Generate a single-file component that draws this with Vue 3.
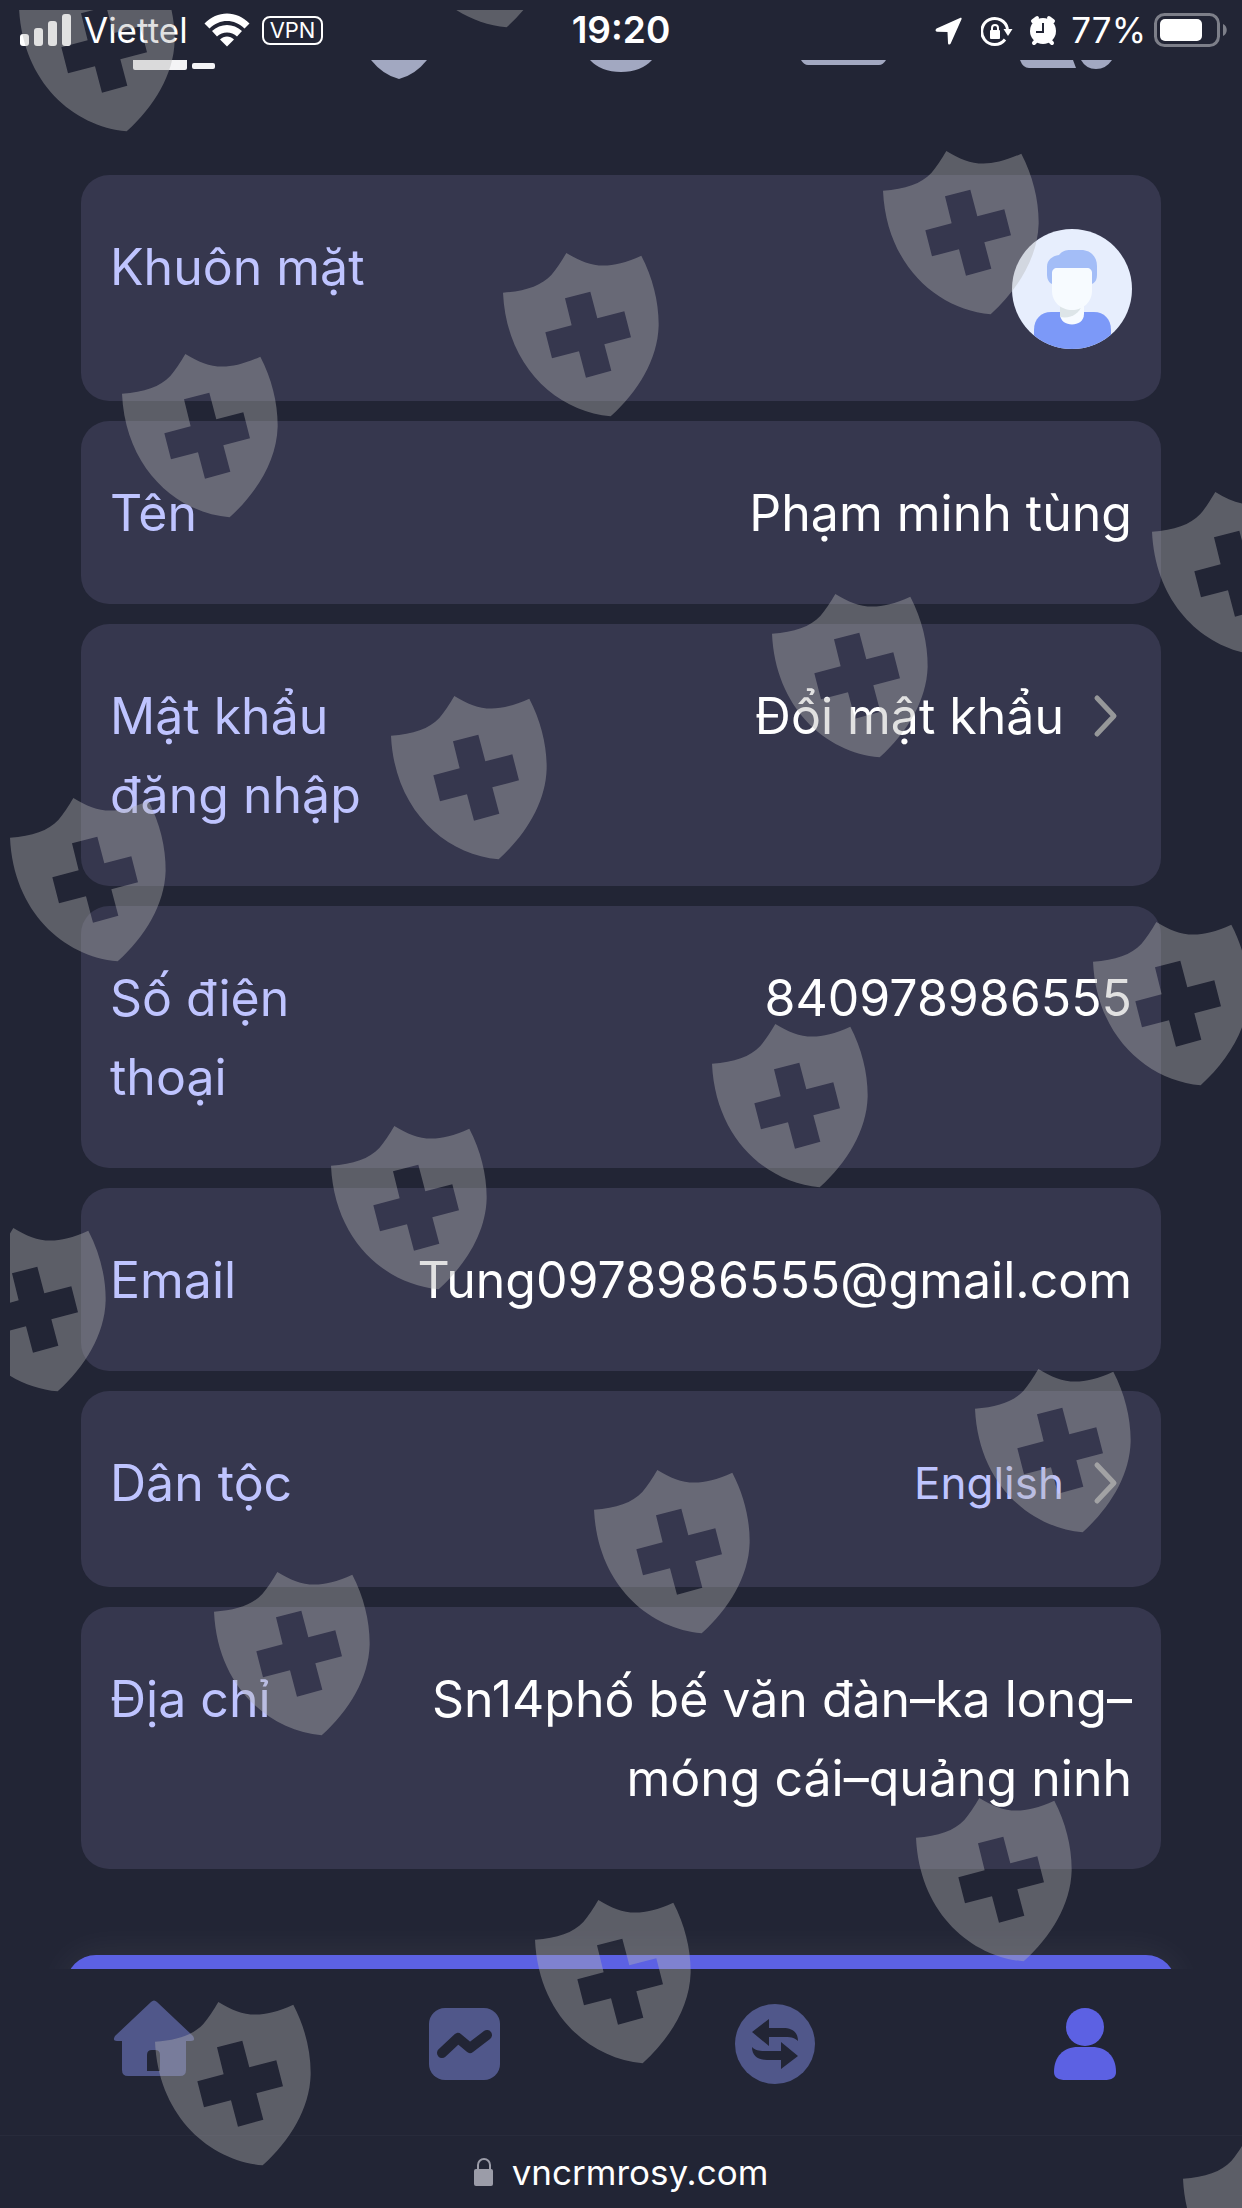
<template>
  <div class="page">
    <header class="status-bar">
      <div class="status-side">
        <svg class="signal" width="52" height="34" viewBox="0 0 52 34" fill="#fff">
          <rect x="0" y="21" width="9" height="12" rx="3" />
          <rect x="14" y="15" width="9" height="18" rx="3" />
          <rect x="28" y="8" width="9" height="25" rx="3" />
          <rect x="42" y="1" width="9" height="32" rx="3" />
        </svg>
        <span class="carrier">Viettel</span>
        <svg class="wifi" width="46" height="34" viewBox="0 0 46 34" fill="#fff">
          <path d="M0.500 10.500C13-3 33-3 45.500 10.500L40.500 15.500C30.500 5.500 15.500 5.500 5.500 15.500Z" />
          <path d="M8 18C16.500 10 29.500 10 38 18L33 23.500C27.500 18 18.500 18 13 23.500Z" />
          <path d="M16 26.500C20 22.500 26 22.500 30 26.500L23 33.500Z" />
        </svg>
        <span class="vpn">VPN</span>
      </div>
      <span class="clock">19:20</span>
      <div class="status-side status-right">
        <svg width="28" height="34" viewBox="0 0 28 34" fill="#fff">
          <path d="M26.500 6.200C27 5 26 4.600 25 5L1.500 15.500C0 16.500 0.300 18.600 2 18.700L12.500 19L13 30C13.100 32 15 32 15.700 30.500Z" />
        </svg>
        <svg class="rotation" width="32" height="34" viewBox="0 0 32 34">
          <path d="M26.500 16A13 13 0 1 0 24 26.500" fill="none" stroke="#fff" stroke-width="3" />
          <path d="M22.500 16H31.500L27 23Z" fill="#fff" />
          <rect x="9" y="17" width="10" height="9" rx="1" fill="#fff" />
          <path d="M11 18V15A3 3 0 0 1 17 15V18" fill="none" stroke="#fff" stroke-width="2" />
        </svg>
        <svg class="alarm" width="28" height="34" viewBox="0 0 28 34">
          <path d="M4 8L8 5M24 8L20 5M5 30L8 27M23 30L20 27" stroke="#fff" stroke-width="4" stroke-linecap="round" />
          <circle cx="14" cy="18" r="13" fill="#fff" />
          <path d="M14 10V19H7" fill="none" stroke="#222535" stroke-width="2" />
        </svg>
        <span class="percent">77%</span>
        <svg class="battery" width="74" height="36" viewBox="0 0 74 36">
          <rect x="1.500" y="2.500" width="63" height="31" rx="9" fill="none" stroke="#7d7f89" stroke-width="3" />
          <rect x="6" y="7" width="42" height="22" rx="5" fill="#fff" />
          <path d="M69 12C74 14 74 22 69 24Z" fill="#7d7f89" />
        </svg>
      </div>
    </header>

    <main class="content">
      <div class="tabs">
        <button v-for="tab in tabs" :key="tab.name" class="tab" :aria-label="tab.name">
          <svg width="100" height="24" viewBox="0 0 100 24">
            <path v-for="(shape, i) in tab.shapes" :key="i" :d="shape" :fill="tab.color" />
          </svg>
        </button>
      </div>

      <section class="cards">
        <div class="card">
          <span class="label">Khuôn mặt</span>
          <div class="value">
            <svg class="avatar" viewBox="0 0 120 120">
              <defs>
                <clipPath id="avatar-clip"><circle cx="60" cy="60" r="60" /></clipPath>
              </defs>
              <g clip-path="url(#avatar-clip)">
                <rect width="120" height="120" fill="#e7eefd" />
                <path d="M22 120V101C22 90 29 83 39 83H82C92 83 99 90 99 101V120Z" fill="#7c99f8" />
                <path d="M40 55C36 53 35 49 35 45V38C35 31 40 27 47 26C50 22 54 21 58 21H69C79 21 85 28 85 37V45C85 50 84 53 80 55Z" fill="#a3bdf7" />
                <path d="M48 76H72V85C72 99 48 99 48 85Z" fill="#f7fbff" />
                <path d="M48 76H70C67 85 59 90 48 88Z" fill="#dde5e8" />
                <path d="M40 44C40 41 42 39 45 39H75C78 39 80 41 80 44V62C80 73 71 81 60 81S40 73 40 62Z" fill="#f7fbff" />
              </g>
            </svg>
          </div>
        </div>

        <div v-for="row in rows" :key="row.label" class="card" :class="{ tall: row.tall }">
          <span class="label">{{ row.label }}</span>
          <button v-if="row.link" class="value link" :class="{ muted: row.tall }">
            {{ row.value }}
            <svg class="chevron" width="68" height="46" viewBox="0 0 68 46">
              <path d="M33 4L50 22L33 40" />
            </svg>
          </button>
          <span v-else class="value">{{ row.value }}</span>
        </div>
      </section>

      <button class="submit" aria-label="Submit"></button>
    </main>

    <nav class="bottom-nav">
      <a href="#home" aria-label="Home">
        <svg class="nav-icon" viewBox="0 0 90 90">
          <path
            fill-rule="evenodd"
            d="M41 3Q44 0 47 3L83 37Q86 42 81 42H76V71Q76 77 70 77H18Q12 77 12 71V42H7Q2 42 5 37ZM42 51Q37 51 37 56V72H50V56Q50 51 45 51Z"
          />
        </svg>
      </a>
      <a href="#market" aria-label="Market">
        <svg class="nav-icon" viewBox="0 0 90 90">
          <rect x="8" y="9" width="71" height="72" rx="16" />
          <path class="zigzag" d="M21 54L37 39L49 49L66 36" />
        </svg>
      </a>
      <a href="#trade" aria-label="Trade">
        <svg class="nav-icon" viewBox="0 0 90 90">
          <circle cx="44" cy="45" r="40" />
          <g class="arrows">
            <path d="M21 33L38 20V29H52C61 29 67 33 67 42C63 38 59 38 52 38H38V47Z" />
            <path d="M67 57L50 70V61H36C27 61 21 57 21 48C25 52 29 52 36 52H50V43Z" />
          </g>
        </svg>
      </a>
      <a href="#profile" class="active" aria-label="Profile">
        <svg class="nav-icon" viewBox="0 0 90 90">
          <circle cx="43" cy="28" r="19" />
          <path d="M12 73C12 58 21 48 36 48H50C65 48 74 58 74 73Q74 81 62 81H24Q12 81 12 73Z" />
        </svg>
      </a>
    </nav>

    <footer class="address-bar">
      <svg width="20" height="30" viewBox="0 0 20 30">
        <path d="M4 14V8A6 6 0 0 1 16 8V14" fill="none" stroke="#9b9ca8" stroke-width="2" />
        <rect x="0" y="12" width="19" height="17" rx="2" fill="#9b9ca8" />
      </svg>
      <span>vncrmrosy.com</span>
    </footer>

    <!-- translucent shields lying over the whole page -->
    <svg class="shields" aria-hidden="true">
      <defs>
        <path
          id="shield"
          fill-rule="evenodd"
          transform="scale(0.3333)"
          d="M0 119C67 115 115 98 145 66C160 49 175 25 190 0C260 42 310 55 415 8C450 75 468 150 467 218C464 320 405 415 323 490C160 475 10 340 0 119ZM186 136L206 217L127 238L147 316L228 295L249 374L325 353L304 274L384 253L364 175L283 196L262 116Z"
        />
      </defs>
      <use v-for="(s, i) in shields" :key="i" href="#shield" :x="s[0]" :y="s[1]" />
    </svg>
  </div>
</template>

<script setup>
const tabs = [
  { name: 'Card', color: '#f4f4f6', shapes: ['M6 0H60V8Q60 10 58 10H8Q6 10 6 8Z', 'M65 5Q65 3 67 3H86Q88 3 88 5V7Q88 9 86 9H67Q65 9 65 7Z'] },
  { name: 'Security', color: '#a2a8c1', shapes: ['M22 0H78Q66 15 50 19Q34 15 22 0Z'] },
  { name: 'Support', color: '#a2a8c1', shapes: ['M19 0H81Q70 12 50 12T19 0Z'] },
  { name: 'Wallet', color: '#a2a8c1', shapes: ['M8 0H93Q90 5 86 5H15Q11 5 8 0Z'] },
  { name: 'Team', color: '#a2a8c1', shapes: ['M5 0H58L61 8H14Q8 8 5 0Z', 'M66 0H97Q91 9 81 9T66 0Z'] },
];

const rows = [
  { label: 'Tên', value: 'Phạm minh tùng' },
  { label: 'Mật khẩu đăng nhập', value: 'Đổi mật khẩu', link: true },
  { label: 'Số điện thoại', value: '840978986555' },
  { label: 'Email', value: 'Tung0978986555@gmail.com' },
  { label: 'Dân tộc', value: 'English', link: true, tall: true },
  { label: 'Địa chỉ', value: 'Sn14phố bế văn đàn–ka long–móng cái–quảng ninh' },
];

// x / y of each shield inside the overlay
const shields = [
  [9, -42],
  [389, -146],
  [873, 141],
  [493, 243],
  [112, 344],
  [1142, 482],
  [762, 584],
  [381, 686],
  [0, 788],
  [1083, 912],
  [702, 1014],
  [321, 1116],
  [-60, 1218],
  [965, 1359],
  [584, 1460],
  [204, 1562],
  [906, 1788],
  [525, 1890],
  [145, 1992],
  [1173, 2129],
];
</script>

<style>
body {
  background: #222535;
}
</style>

<style scoped>
.page {
  position: relative;
  display: flex;
  flex-direction: column;
  min-height: 100vh;
  overflow: hidden;
  background: #222535;
  color: #fff;
  font-family: Inter, "Noto Sans", sans-serif;
}

button {
  padding: 0;
  border: none;
  background: none;
  color: inherit;
  font: inherit;
  cursor: pointer;
}

.status-bar {
  display: flex;
  align-items: center;
  height: 60px;
  padding: 0 14px 0 20px;
  font-size: 35px;
  line-height: 60px;
}

.status-side {
  display: flex;
  flex: 1;
  align-items: center;
}

.status-right {
  justify-content: flex-end;
}

.carrier {
  margin: 0 16px 0 12px;
}

.vpn {
  margin-left: 12px;
  padding: 0 6px;
  border: 2px solid #fff;
  border-radius: 8px;
  font-size: 22px;
  line-height: 25px;
}

.clock {
  margin-right: 6px;
  font-size: 37px;
  font-weight: 600;
}

.rotation {
  margin-left: 18px;
}

.alarm {
  margin: 0 14px 0 16px;
}

.battery {
  margin-left: 8px;
}

.content {
  display: flex;
  flex: 1;
  flex-direction: column;
}

.tabs {
  display: flex;
  height: 115px;
  padding: 0 66px;
}

.tab {
  display: flex;
  flex: 1;
  justify-content: center;
}

.cards {
  display: flex;
  flex-direction: column;
  gap: 20px;
  padding: 0 81px 86px;
}

.card {
  display: flex;
  justify-content: space-between;
  align-items: flex-start;
  padding: 53px 29px 51px;
  border-radius: 28px;
  background: #36374e;
  font-size: 50px;
  line-height: 79px;
}

.card.tall {
  padding-bottom: 64px;
}

.label {
  width: 270px;
  flex: none;
  color: #bfc4ff;
}

.value {
  flex: 1;
  text-align: right;
}

.link {
  display: flex;
  justify-content: flex-end;
  align-items: center;
}

.muted {
  color: #bfc4ff;
  font-size: 44px;
}

.avatar {
  display: block;
  width: 120px;
  height: 122px;
  margin-left: auto;
}

.chevron path {
  fill: none;
  stroke: #969799;
  stroke-width: 5;
  stroke-linecap: round;
  stroke-linejoin: round;
}

/* the lower part slides under the bottom nav */
.submit {
  height: 74px;
  margin: auto 66px -60px;
  border-radius: 30px;
  background: #5c61e3;
  box-shadow: 0 0 40px rgba(255, 255, 255, 0.07);
}

.bottom-nav {
  position: relative;
  display: flex;
  padding: 30px 0 46px;
  border-bottom: 1px solid #282b3b;
  background: #222535;
}

.bottom-nav a {
  display: flex;
  flex: 1;
  justify-content: center;
  color: #50578a;
}

.bottom-nav a.active {
  color: #5c61e3;
}

.nav-icon {
  width: 90px;
  height: 90px;
  fill: currentColor;
}

.zigzag {
  fill: none;
  stroke: #222535;
  stroke-width: 10;
  stroke-linecap: round;
  stroke-linejoin: round;
}

.arrows {
  fill: #222535;
}

.address-bar {
  display: flex;
  justify-content: center;
  align-items: center;
  gap: 18px;
  height: 72px;
  font-size: 35px;
}

.shields {
  position: absolute;
  top: 10px;
  left: 10px;
  width: calc(100% - 10px);
  height: calc(100% - 10px);
  overflow: hidden;
  fill: rgb(180, 181, 180);
  fill-opacity: 0.4;
  pointer-events: none;
}
</style>
